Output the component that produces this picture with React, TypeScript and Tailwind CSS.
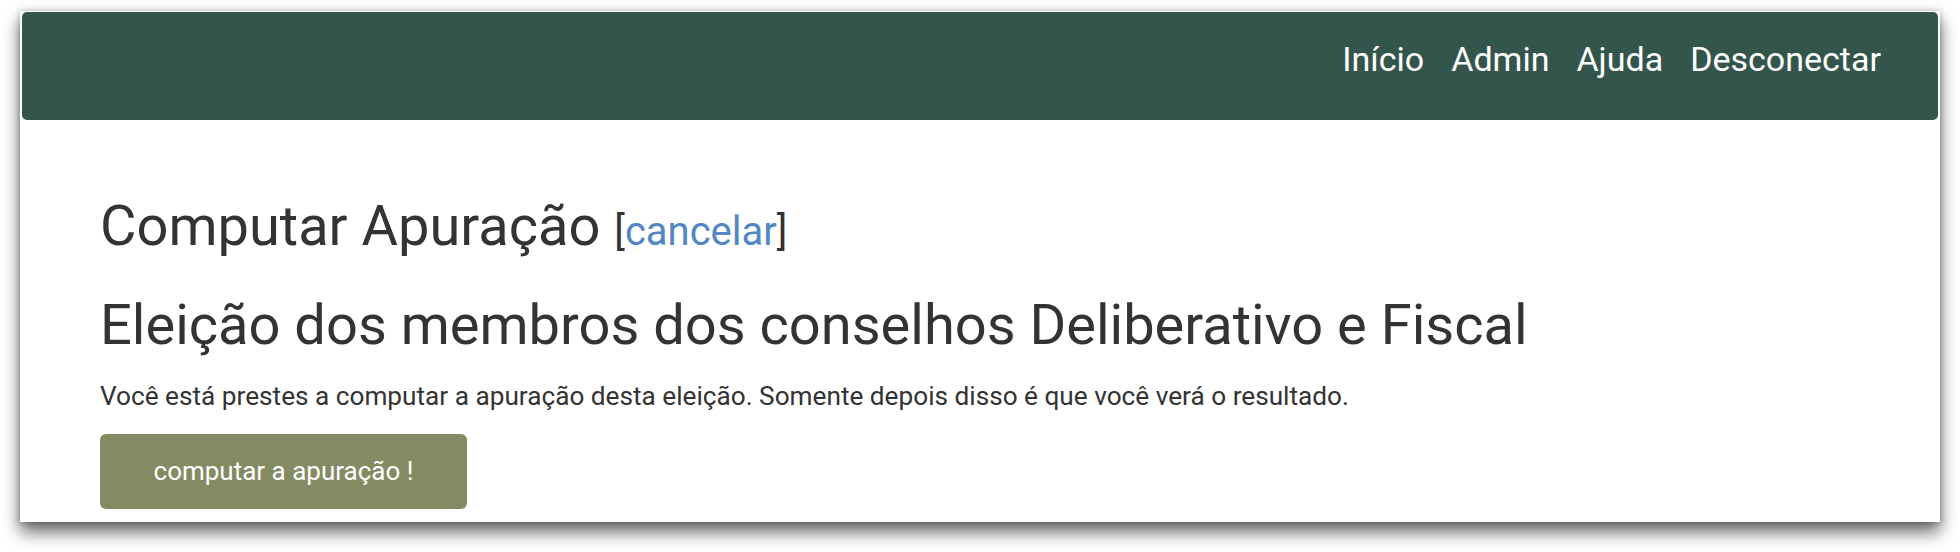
import React from 'react';

const NAV_ITEMS = ['Início', 'Admin', 'Ajuda', 'Desconectar'];

export default function App() {
  return (
    <div className="h-[552px] w-[1960px] overflow-hidden bg-white pl-[20px] pt-[11px] font-['Roboto',sans-serif] text-[#333333]">
      {/* Window */}
      <div className="flex h-[511px] w-[1920px] flex-col bg-white px-[2px] pt-[1px] shadow-[0_10px_16px_rgba(0,0,0,0.6),0_0_6px_rgba(0,0,0,0.25)]">
        {/* Navbar */}
        <nav className="flex h-[108px] items-start justify-end rounded-[5px] bg-[#34554b] pr-[57px] pt-[27px]">
          <ul className="flex gap-[27px]">
            {NAV_ITEMS.map((item) => (
              <li key={item}>
                <a href="#" className="text-[34px] leading-[40px] text-white">
                  {item}
                </a>
              </li>
            ))}
          </ul>
        </nav>

        {/* Content */}
        <div className="flex flex-col items-start pl-[78px] pt-[74px]">
          <h2 className="text-[56px] leading-[64px] font-normal">
            Computar Apuração{' '}
            <span className="text-[40px]">
              [<a href="#" className="text-[#5286c4]">cancelar</a>]
            </span>
          </h2>
          <h3 className="mt-[27px] text-[56px] leading-[68px] font-normal">
            Eleição dos membros dos conselhos Deliberativo e Fiscal
          </h3>
          <p className="mt-[19px] text-[26.2px] leading-[36px]">
            Você está prestes a computar a apuração desta eleição. Somente depois disso é que você verá o resultado.
          </p>
          <button className="mt-[20px] flex h-[75px] w-[367px] items-center justify-center rounded-[6px] bg-[#848a62] text-[26px] text-white">
            computar a apuração !
          </button>
        </div>
      </div>
    </div>
  );
}
